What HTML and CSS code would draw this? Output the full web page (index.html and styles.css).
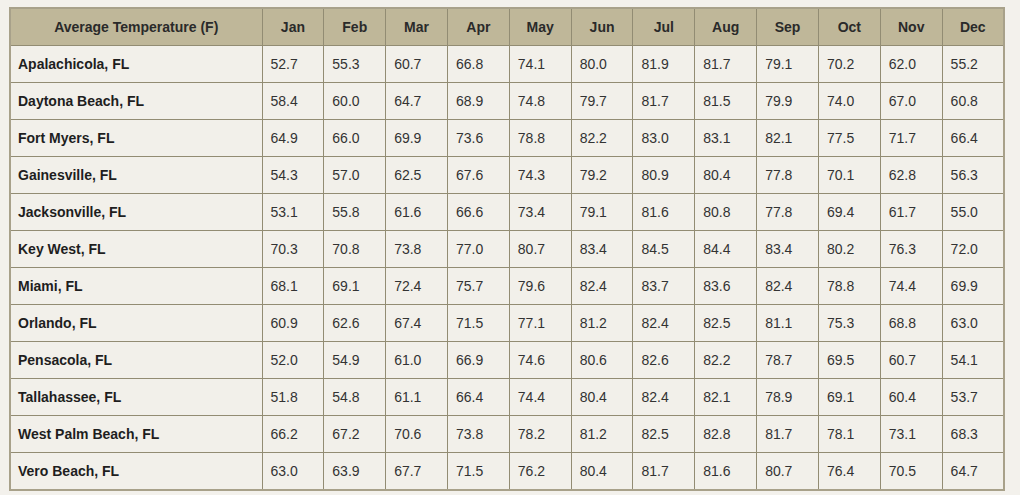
FILE: index.html
```html
<!DOCTYPE html>
<html>
<head>
<meta charset="utf-8">
<link rel="stylesheet" href="styles.css">
</head>
<body>
<div class="wrap">
<table class="temps">
<colgroup><col class="c-city"><col span="12" class="c-m"></colgroup>
<thead>
<tr><th>Average Temperature (F)</th><th>Jan</th><th>Feb</th><th>Mar</th><th>Apr</th><th>May</th><th>Jun</th><th>Jul</th><th>Aug</th><th>Sep</th><th>Oct</th><th>Nov</th><th>Dec</th></tr>
</thead>
<tbody>
<tr><td class="city">Apalachicola, FL</td><td>52.7</td><td>55.3</td><td>60.7</td><td>66.8</td><td>74.1</td><td>80.0</td><td>81.9</td><td>81.7</td><td>79.1</td><td>70.2</td><td>62.0</td><td>55.2</td></tr>
<tr><td class="city">Daytona Beach, FL</td><td>58.4</td><td>60.0</td><td>64.7</td><td>68.9</td><td>74.8</td><td>79.7</td><td>81.7</td><td>81.5</td><td>79.9</td><td>74.0</td><td>67.0</td><td>60.8</td></tr>
<tr><td class="city">Fort Myers, FL</td><td>64.9</td><td>66.0</td><td>69.9</td><td>73.6</td><td>78.8</td><td>82.2</td><td>83.0</td><td>83.1</td><td>82.1</td><td>77.5</td><td>71.7</td><td>66.4</td></tr>
<tr><td class="city">Gainesville, FL</td><td>54.3</td><td>57.0</td><td>62.5</td><td>67.6</td><td>74.3</td><td>79.2</td><td>80.9</td><td>80.4</td><td>77.8</td><td>70.1</td><td>62.8</td><td>56.3</td></tr>
<tr><td class="city">Jacksonville, FL</td><td>53.1</td><td>55.8</td><td>61.6</td><td>66.6</td><td>73.4</td><td>79.1</td><td>81.6</td><td>80.8</td><td>77.8</td><td>69.4</td><td>61.7</td><td>55.0</td></tr>
<tr><td class="city">Key West, FL</td><td>70.3</td><td>70.8</td><td>73.8</td><td>77.0</td><td>80.7</td><td>83.4</td><td>84.5</td><td>84.4</td><td>83.4</td><td>80.2</td><td>76.3</td><td>72.0</td></tr>
<tr><td class="city">Miami, FL</td><td>68.1</td><td>69.1</td><td>72.4</td><td>75.7</td><td>79.6</td><td>82.4</td><td>83.7</td><td>83.6</td><td>82.4</td><td>78.8</td><td>74.4</td><td>69.9</td></tr>
<tr><td class="city">Orlando, FL</td><td>60.9</td><td>62.6</td><td>67.4</td><td>71.5</td><td>77.1</td><td>81.2</td><td>82.4</td><td>82.5</td><td>81.1</td><td>75.3</td><td>68.8</td><td>63.0</td></tr>
<tr><td class="city">Pensacola, FL</td><td>52.0</td><td>54.9</td><td>61.0</td><td>66.9</td><td>74.6</td><td>80.6</td><td>82.6</td><td>82.2</td><td>78.7</td><td>69.5</td><td>60.7</td><td>54.1</td></tr>
<tr><td class="city">Tallahassee, FL</td><td>51.8</td><td>54.8</td><td>61.1</td><td>66.4</td><td>74.4</td><td>80.4</td><td>82.4</td><td>82.1</td><td>78.9</td><td>69.1</td><td>60.4</td><td>53.7</td></tr>
<tr><td class="city">West Palm Beach, FL</td><td>66.2</td><td>67.2</td><td>70.6</td><td>73.8</td><td>78.2</td><td>81.2</td><td>82.5</td><td>82.8</td><td>81.7</td><td>78.1</td><td>73.1</td><td>68.3</td></tr>
<tr><td class="city">Vero Beach, FL</td><td>63.0</td><td>63.9</td><td>67.7</td><td>71.5</td><td>76.2</td><td>80.4</td><td>81.7</td><td>81.6</td><td>80.7</td><td>76.4</td><td>70.5</td><td>64.7</td></tr>
</tbody>
</table>
</div>
</body>
</html>
```
FILE: styles.css
```css
html, body {
  margin: 0;
  padding: 0;
  background: #f3f1ec;
}
.wrap {
  padding: 7px 0 0 9px;
}
.temps {
  border-collapse: collapse;
  width: 996px;
  table-layout: fixed;
  font-family: "Liberation Sans", Arial, sans-serif;
  font-size: 14px;
  border: 2px solid #a8a18a;
  background: #f2f0ea;
}
.c-city { width: 252px; }
.temps th {
  background: #bfb799;
  color: #2a2a2a;
  font-weight: bold;
  text-align: center;
  height: 36px;
  padding: 0;
  border: 1px solid #928c73;
  border-top: 2px solid #a8a18a;
}
.temps td {
  height: 36px;
  padding: 0 0 0 8px;
  color: #333;
  border: 1px solid #928c73;
  text-align: left;
}
.temps td.city {
  padding-left: 7px;
  font-weight: bold;
  color: #1e1e1e;
}
```
